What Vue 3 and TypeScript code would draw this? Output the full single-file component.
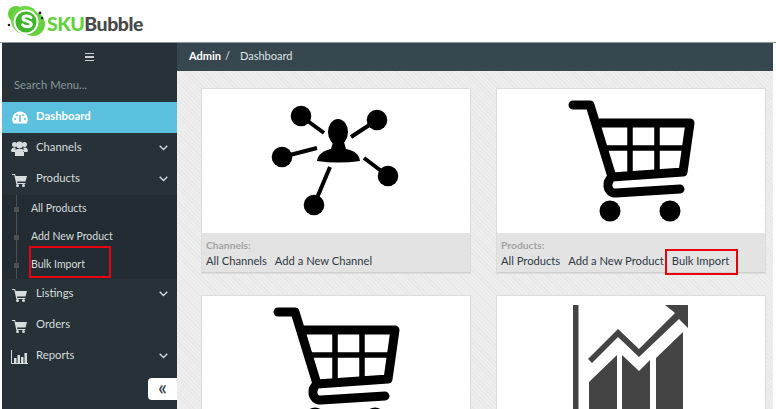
<script setup lang="ts">
interface NavItem { label: string; icon: string; chevron: boolean; active?: boolean }
const before: NavItem[] = [
  { label: 'Dashboard', icon: 'gauge', chevron: false, active: true },
  { label: 'Channels', icon: 'users', chevron: true },
  { label: 'Products', icon: 'cart', chevron: true },
]
const after: NavItem[] = [
  { label: 'Listings', icon: 'cart', chevron: true },
  { label: 'Orders', icon: 'cart', chevron: false },
  { label: 'Reports', icon: 'bars', chevron: true },
]
const subs = ['All Products', 'Add New Product', 'Bulk Import']
</script>

<template>
  <div class="page">
    <header class="logo-bar">
      <svg class="logo-mark" width="42" height="36" viewBox="0 0 42 36">
        <circle cx="11" cy="11" r="8" fill="#63cf3e" />
        <circle cx="28" cy="21" r="12" fill="#66d13f" />
        <circle cx="20" cy="17" r="14" fill="#6ad643" />
        <circle cx="21" cy="19" r="12.500" fill="#fff" />
        <circle cx="21" cy="19" r="10.500" fill="#3fb52a" />
        <path d="M26 14.500c-1.500-2-8-2.200-8 .9 0 3.300 8.500 2.200 8.300 6-.2 3-7 2.800-8.800.5" fill="none" stroke="#fff" stroke-width="3" stroke-linecap="round" />
        <circle cx="4" cy="22" r="1.300" fill="#222" />
        <circle cx="35" cy="10" r="1.400" fill="#222" />
        <circle cx="37" cy="15" r="1.200" fill="#222" />
      </svg>
      <span class="logo-text"><span class="sku">SKU</span>Bubble</span>
    </header>

    <div class="shell">
      <aside class="sidebar">
        <div class="burger"><i></i><i></i><i></i></div>
        <div class="search">Search Menu...</div>
        <nav>
          <a v-for="item in before" :key="item.label" class="nav-item" :class="{ active: item.active }">
            <span class="nav-icon">
              <svg v-if="item.icon === 'gauge'" width="16" height="13" viewBox="0 0 16 13">
                <path d="M8 .5a7.800 7.800 0 0 0-7.800 7.800c0 1.800.5 3.300 1.300 4.200h13c.8-.9 1.300-2.400 1.300-4.200A7.800 7.800 0 0 0 8 .5z" fill="#fff" />
                <circle cx="3.200" cy="8" r="1" fill="#5bc0de" /><circle cx="5" cy="4.300" r="1" fill="#5bc0de" />
                <circle cx="11" cy="4.300" r="1" fill="#5bc0de" /><circle cx="12.800" cy="8" r="1" fill="#5bc0de" />
                <path d="M8 4v7" stroke="#5bc0de" stroke-width="1.600" />
              </svg>
              <svg v-else-if="item.icon === 'users'" width="17" height="15" viewBox="0 0 17 15">
                <circle cx="3.500" cy="3.500" r="2.500" fill="#d7dcdd" /><circle cx="13.500" cy="3.500" r="2.500" fill="#d7dcdd" />
                <circle cx="8.500" cy="4" r="3.400" fill="#d7dcdd" />
                <path d="M0 10.500c0-3 1.500-4 3-4h1.500v4.500H1.500zM17 10.500c0-3-1.500-4-3-4h-1.500v4.500h3zM4 15V10.500C4 9 5 8 6.500 8h4C12 8 13 9 13 10.500V15z" fill="#d7dcdd" />
              </svg>
              <svg v-else-if="item.icon === 'cart'" width="15" height="14" viewBox="0 0 15 14">
                <path d="M0 1h3l.6 2H15l-1.500 5.500H5l.4 1.500h8v1H4.300L2.300 2H0z" fill="#d7dcdd" />
                <circle cx="5.500" cy="12.500" r="1.500" fill="#d7dcdd" /><circle cx="11.500" cy="12.500" r="1.500" fill="#d7dcdd" />
              </svg>
            </span>
            <span class="nav-label">{{ item.label }}</span>
            <svg v-if="item.chevron" class="chevron" width="9" height="6" viewBox="0 0 9 6"><path d="M.7.7l3.800 3.800L8.300.7" fill="none" stroke="#d7dcdd" stroke-width="1.300" /></svg>
          </a>
        </nav>
        <div class="subnav">
          <div v-for="s in subs" :key="s" class="sub-item"><span class="dot"></span>{{ s }}</div>
          <div class="flag-side"></div>
        </div>
        <nav>
          <a v-for="item in after" :key="item.label" class="nav-item">
            <span class="nav-icon">
              <svg v-if="item.icon === 'cart'" width="15" height="14" viewBox="0 0 15 14">
                <path d="M0 1h3l.6 2H15l-1.500 5.500H5l.4 1.500h8v1H4.300L2.300 2H0z" fill="#d7dcdd" />
                <circle cx="5.500" cy="12.500" r="1.500" fill="#d7dcdd" /><circle cx="11.500" cy="12.500" r="1.500" fill="#d7dcdd" />
              </svg>
              <svg v-else width="17" height="14" viewBox="0 0 17 14">
                <path d="M.5 0v13.500H17" fill="none" stroke="#d7dcdd" stroke-width="1" />
                <path d="M3 8h2.500v5H3zM6.500 5H9v8H6.500zM10 7h2.500v6H10zM13.500 3H16v10h-2.500z" fill="#d7dcdd" />
              </svg>
            </span>
            <span class="nav-label">{{ item.label }}</span>
            <svg v-if="item.chevron" class="chevron" width="9" height="6" viewBox="0 0 9 6"><path d="M.7.7l3.800 3.800L8.300.7" fill="none" stroke="#d7dcdd" stroke-width="1.300" /></svg>
          </a>
        </nav>
        <button class="collapse">«</button>
      </aside>

      <main class="main">
        <div class="crumbs"><b>Admin</b><span class="sep">/</span><span>Dashboard</span></div>
        <div class="grid">
          <section class="card">
            <div class="art art-net">
              <svg width="130" height="114" viewBox="0 0 130 114">
                <path d="M30 12L53 29M106 16L80 33M11 53L46 44M93 54L117 72M59 63L43 101" stroke="#000" stroke-width="4" fill="none" />
                <circle cx="30" cy="12" r="10.300" /><circle cx="106" cy="16" r="10.300" /><circle cx="11" cy="53" r="10.300" />
                <circle cx="117" cy="72" r="10.300" /><circle cx="43" cy="101" r="10.300" />
                <ellipse cx="67" cy="28" rx="10" ry="13" />
                <path d="M62 38H73L75 45C84 47 88 50 89 57Q67 60 46 57C47 50 52 47 60 45Z" />
              </svg>
            </div>
            <div class="foot">
              <div class="foot-title">Channels:</div>
              <div class="links"><a>All Channels</a><a>Add a New Channel</a></div>
            </div>
          </section>

          <section class="card">
            <div class="art art-cart">
              <svg width="127" height="122" viewBox="0 0 127 122">
                <path d="M5 5H22L44 77M30 23H122L115 72L44 77C38 82 38 93 48 93L112 89" fill="none" stroke="#000" stroke-width="9" stroke-linecap="round" stroke-linejoin="round" />
                <path d="M62 23V76M89 23V74M35 48H120" stroke="#000" stroke-width="5.500" />
                <circle cx="42" cy="111" r="10.500" /><circle cx="102" cy="111" r="10.500" />
              </svg>
            </div>
            <div class="foot">
              <div class="foot-title">Products:</div>
              <div class="links"><a>All Products</a><a>Add a New Product</a><a class="flagged">Bulk Import</a></div>
            </div>
          </section>

          <section class="card">
            <div class="art art-cart">
              <svg width="127" height="122" viewBox="0 0 127 122">
                <path d="M5 5H22L44 77M30 23H122L115 72L44 77C38 82 38 93 48 93L112 89" fill="none" stroke="#000" stroke-width="9" stroke-linecap="round" stroke-linejoin="round" />
                <path d="M62 23V76M89 23V74M35 48H120" stroke="#000" stroke-width="5.500" />
                <circle cx="42" cy="111" r="10.500" /><circle cx="102" cy="111" r="10.500" />
              </svg>
            </div>
          </section>

          <section class="card">
            <div class="art art-chart">
              <svg width="116" height="104" viewBox="0 0 116 104" fill="#444">
                <rect x="0" y="0" width="5.500" height="104" />
                <path d="M15 54L45 24L66 44L102 8L92 0H115V23L106 14L66 52L45 32L19 58Z" />
                <path d="M16 77L44 50V104H16zM49 50L66 66L77 55V104H49zM83 53L110 27V104H83z" />
              </svg>
            </div>
          </section>
        </div>
      </main>
    </div>
  </div>
</template>

<style scoped>
.page { width: 776px; height: 409px; overflow: hidden; background: #fff; font-family: Lato, "Open Sans", sans-serif; display: flex; flex-direction: column; }
.logo-bar { height: 43px; flex: none; display: flex; align-items: center; padding-left: 5px; box-sizing: border-box; border-bottom: 1px solid #8f9699; }
.logo-text { font-size: 19.500px; font-weight: 900; color: #484848; margin-top: 5px; letter-spacing: -.5px; }
.sku { color: #63d13c; }
.shell { flex: 1; display: flex; margin: 0 3px 0 2px; min-height: 0; }
.sidebar { width: 175px; flex: none; background: #263238; position: relative; color: #d7dcdd; }
.burger { height: 28px; display: flex; flex-direction: column; align-items: center; justify-content: center; gap: 2px; }
.burger i { width: 9px; height: 1.500px; background: #c9cfd1; display: block; }
.search { height: 31px; line-height: 28px; padding-left: 12px; color: #8b9497; font-size: 11.300px; box-sizing: border-box; }
.nav-item { height: 31px; display: flex; align-items: center; padding: 0 9px 4px 5px; box-sizing: border-box; font-size: 11.300px; color: #d7dcdd; }
.nav-item.active { background: #5bc0de; color: #fff; font-weight: 700; }
.nav-icon { width: 25px; margin-right: 4px; display: flex; justify-content: center; flex: none; margin-top: 4px; }
.nav-label { flex: 1; }
.chevron { margin-top: 3px; }
.subnav { background: #222c32; height: 84px; position: relative; font-size: 10.500px; }
.subnav::before { content: ""; position: absolute; left: 14px; top: 0; bottom: 0; width: 1px; background: #4a4f52; }
.sub-item { height: 28px; line-height: 27px; padding-left: 29px; position: relative; color: #d7dcdd; }
.dot { position: absolute; left: 12px; top: 12px; width: 5px; height: 5px; background: #4d4f50; }
.flag-side { position: absolute; left: 27px; top: 51px; width: 82px; height: 32px; border: 2px solid #e8000d; box-sizing: border-box; }
.collapse { position: absolute; right: 0; bottom: 9px; width: 29px; height: 22px; border: 0; padding: 0 0 4px; background: #fff; border-radius: 4px 0 0 4px; color: #263238; font: 400 21px/18px Lato, sans-serif; }
.main { flex: 1; min-width: 0; display: flex; flex-direction: column; background-color: #eeeeee; background-image: repeating-linear-gradient(45deg, #e7e7e7 0 1px, transparent 1px 3px); }
.crumbs { height: 28px; flex: none; background: #37474f; color: #dfe4e6; display: flex; align-items: center; padding: 0 0 3px 12px; box-sizing: border-box; font-size: 11px; }
.crumbs b { color: #fff; font-weight: 700; }
.sep { margin: 0 10px 0 4px; }
.grid { flex: 1; min-height: 0; padding: 17px 0 0 24px; display: grid; grid-template-columns: 270px 270px; grid-template-rows: 186px 186px; column-gap: 25px; row-gap: 21px; }
.card { background: #fff; border: 1px solid #dcdcdc; box-sizing: border-box; display: flex; flex-direction: column; min-height: 0; }
.art { flex: 1; display: flex; align-items: flex-start; justify-content: center; box-sizing: border-box; min-height: 0; }
.art-net { padding-top: 15px; }
.art-cart { padding-top: 11px; }
.art-chart { padding-top: 9px; }
.art svg { flex: none; }
.foot { height: 40px; background: #e3e3e3; padding: 5px 4px 0; box-sizing: border-box; font-size: 11.200px; border-bottom: 1px solid #d0d0d0; }
.foot-title { color: #a3a3a3; font-size: 10.300px; font-weight: 700; line-height: 14px; }
.links { display: flex; gap: 8px; color: #2f3a44; line-height: 17px; }
.flagged { position: relative; }
.flagged::after { content: ""; position: absolute; left: -7px; right: -9px; top: -3px; bottom: -6px; border: 2px solid #e8000d; }
</style>
